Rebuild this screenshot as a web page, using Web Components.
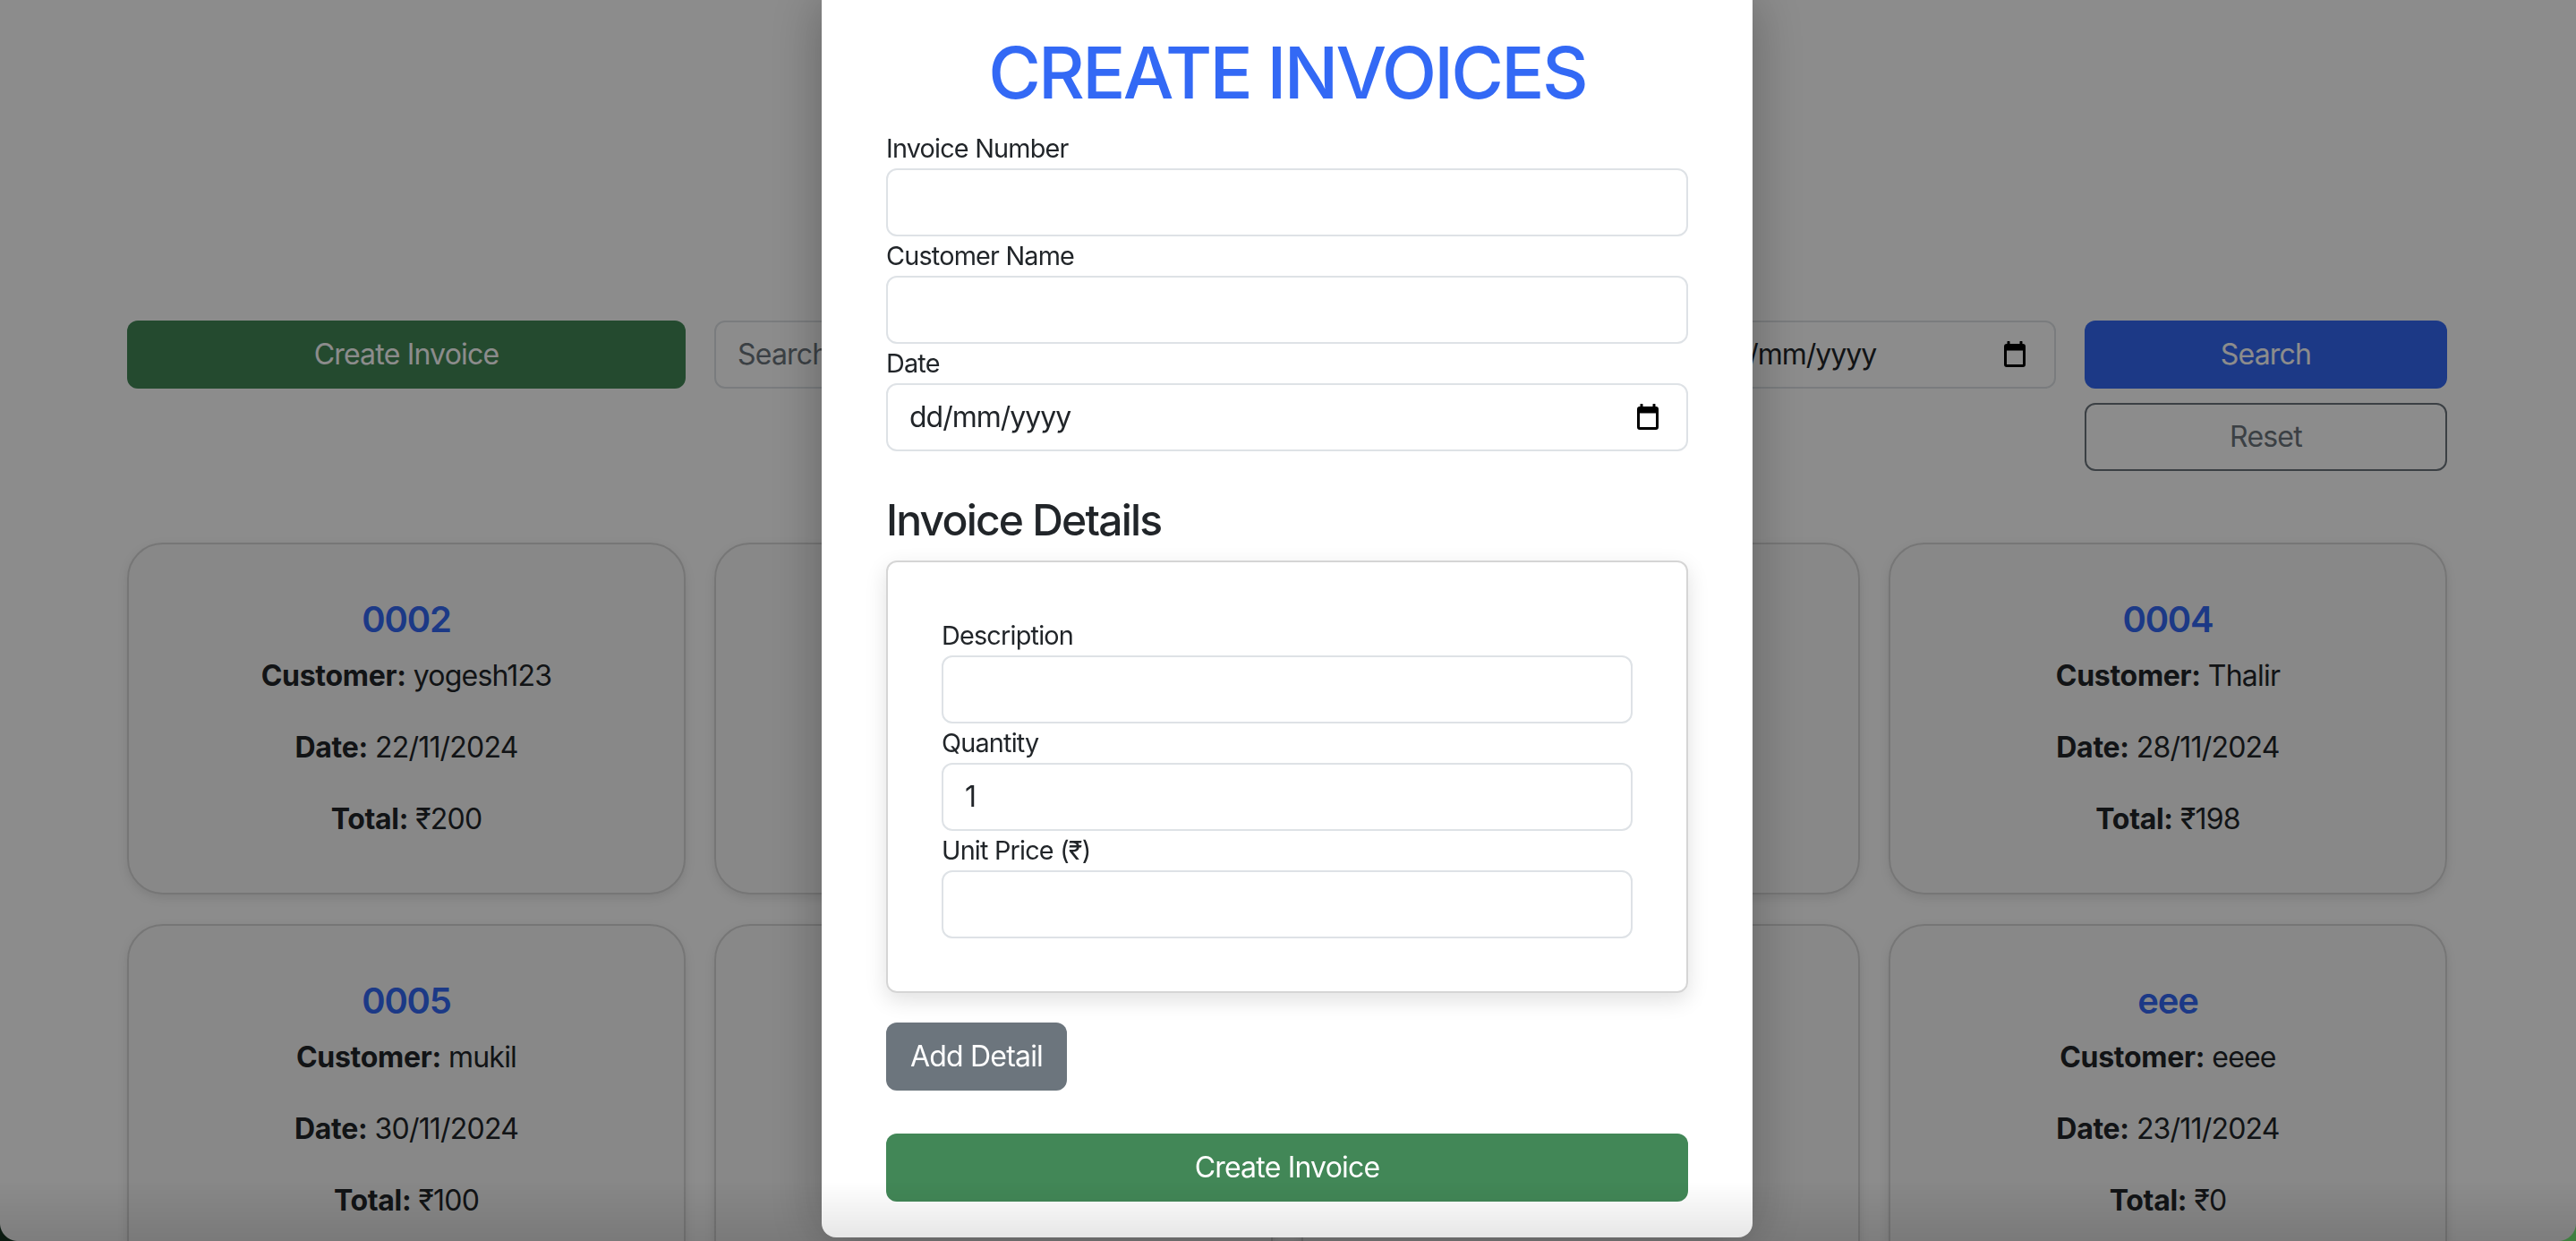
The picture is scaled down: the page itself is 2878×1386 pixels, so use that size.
<!DOCTYPE html>
<html>
<head>
<meta charset="utf-8">
<title>Invoices</title>
<style>
  html, body { margin: 0; height: 100%; overflow: hidden; background: #fff; }
  body { font: 32px/48px Inter, "Noto Sans", sans-serif; color: #212529; letter-spacing: -0.8px; }
</style>
</head>
<body>
<invoice-page>
  <invoice-toolbar slot="toolbar"></invoice-toolbar>
  <invoice-card slot="cards" number="0002" customer="yogesh123" date="22/11/2024" total="₹200"></invoice-card>
  <invoice-card slot="cards"></invoice-card>
  <invoice-card slot="cards"></invoice-card>
  <invoice-card slot="cards" number="0004" customer="Thalir" date="28/11/2024" total="₹198"></invoice-card>
  <invoice-card slot="cards" number="0005" customer="mukil" date="30/11/2024" total="₹100"></invoice-card>
  <invoice-card slot="cards"></invoice-card>
  <invoice-card slot="cards"></invoice-card>
  <invoice-card slot="cards" number="eee" customer="eeee" date="23/11/2024" total="₹0"></invoice-card>
</invoice-page>
<invoice-modal></invoice-modal>
<bottom-fade></bottom-fade>

<script>
const calendarIcon = `<svg width="26" height="30" viewBox="0 0 26 30" aria-hidden="true">
  <path d="M6 1v4M20 1v4" stroke="#000" stroke-width="3" stroke-linecap="round"/>
  <path fill="#000" fill-rule="evenodd" d="M4 3h18a3 3 0 0 1 3 3v20a3 3 0 0 1-3 3H4a3 3 0 0 1-3-3V6a3 3 0 0 1 3-3zm0 7.5V26h18V10.500z"/>
</svg>`;

class InvoicePage extends HTMLElement {
  connectedCallback() {
    this.attachShadow({ mode: 'open' });
    this.shadowRoot.innerHTML = `
      <style>
        :host { display: block; padding: 358px 144px 0 142px; }
        .cards {
          display: grid;
          grid-template-columns: repeat(4, 624px);
          gap: 33px 32px;
          margin-top: 80px;
        }
      </style>
      <slot name="toolbar"></slot>
      <div class="cards"><slot name="cards"></slot></div>
    `;
  }
}

class InvoiceToolbar extends HTMLElement {
  connectedCallback() {
    this.attachShadow({ mode: 'open' });
    this.shadowRoot.innerHTML = `
      <style>
        :host {
          display: grid;
          grid-template-columns: 624px 624px 405px 406px 405px;
          column-gap: 32px;
          align-items: start;
          margin-right: -4px;
        }
        .btn, .field {
          box-sizing: border-box;
          height: 76px;
          border-radius: 12px;
          display: flex;
          align-items: center;
        }
        .btn { justify-content: center; color: #fff; border: 2px solid transparent; }
        .green { background: #428757; }
        .blue { background: #3369f5; margin-bottom: 16px; }
        .outline { color: #6c757d; border-color: #6c757d; }
        .field {
          border: 2px solid #dee2e6;
          background: #fff;
          padding: 0 31px 0 24px;
          justify-content: space-between;
        }
        .placeholder { color: #6c757d; white-space: nowrap; }
        .date { letter-spacing: -1px; margin-left: -1px; }
        svg { display: block; }
      </style>
      <div class="btn green">Create Invoice</div>
      <div class="field"><span class="placeholder">Search</span></div>
      <div class="field"></div>
      <div class="field"><span class="date">dd/mm/yyyy</span>${calendarIcon}</div>
      <div>
        <div class="btn blue">Search</div>
        <div class="btn outline">Reset</div>
      </div>
    `;
  }
}

class InvoiceCard extends HTMLElement {
  connectedCallback() {
    this.attachShadow({ mode: 'open' });
    // cards under the modal have no attributes, their content can't be seen
    const number = this.getAttribute('number');
    const body = number ? `
      <h5>${number}</h5>
      <p><b>Customer:</b> ${this.getAttribute('customer')}</p>
      <p><b>Date:</b> ${this.getAttribute('date')}</p>
      <p><b>Total:</b> ${this.getAttribute('total')}</p>
    ` : '';
    this.shadowRoot.innerHTML = `
      <style>
        :host {
          display: block;
          box-sizing: border-box;
          height: 393px;
          padding: 60px 20px 0;
          background: #f8f8f8;
          border: 2px solid #d8d8d8;
          border-radius: 40px;
          box-shadow: 0 4px 12px rgba(0, 0, 0, 0.1);
          text-align: center;
        }
        h5 {
          margin: 0 0 15px;
          font-size: 40px;
          line-height: 48px;
          font-weight: 600;
          letter-spacing: -1.2px;
          color: #3369f5;
        }
        p { margin: 0 0 32px; }
        b { font-weight: 700; letter-spacing: -0.3px; }
      </style>
      ${body}
    `;
  }
}

class FormField extends HTMLElement {
  connectedCallback() {
    this.attachShadow({ mode: 'open' });
    const date = this.hasAttribute('date');
    const value = this.getAttribute('value') || (date ? 'dd/mm/yyyy' : '');
    this.shadowRoot.innerHTML = `
      <style>
        :host { display: block; }
        label { display: block; height: 44px; font-size: 28.8px; line-height: 44px; letter-spacing: -0.8px; }
        .input {
          box-sizing: border-box;
          height: 76px;
          padding: 0 30px 0 24px;
          display: flex;
          align-items: center;
          justify-content: space-between;
          background: #fff;
          border: 2px solid #dee2e6;
          border-radius: 12px;
        }
        span { letter-spacing: -1px; }
        svg { display: block; }
      </style>
      <label>${this.getAttribute('label')}</label>
      <div class="input"><span>${value}</span>${date ? calendarIcon : ''}</div>
    `;
  }
}

class InvoiceModal extends HTMLElement {
  connectedCallback() {
    this.attachShadow({ mode: 'open' });
    this.shadowRoot.innerHTML = `
      <style>
        :host {
          position: fixed;
          inset: 0;
          display: block;
          background: rgba(0, 0, 0, 0.45);
          z-index: 5;
        }
        .dialog {
          box-sizing: border-box;
          width: 1040px;
          height: 1382px;
          margin-left: 918px;
          padding: 33px 72px 0;
          background: #fff;
          border-radius: 0 0 16px 16px;
          box-shadow: 0 0 60px rgba(0, 0, 0, 0.3);
        }
        h2 {
          margin: 0 0 15px;
          font-size: 80px;
          line-height: 96px;
          font-weight: 450;
          letter-spacing: -2.7px;
          text-align: center;
          color: #3369f5;
        }
        h3 {
          margin: 48px 0 16px;
          font-size: 48px;
          line-height: 58px;
          font-weight: 500;
          letter-spacing: -1.8px;
        }
        .details {
          box-sizing: border-box;
          height: 483px;
          padding: 60px;
          border: 2px solid #d5d5d5;
          border-radius: 12px;
          box-shadow: 0 8px 24px rgba(0, 0, 0, 0.12);
        }
        .btn {
          box-sizing: border-box;
          height: 76px;
          border-radius: 12px;
          display: flex;
          align-items: center;
          justify-content: center;
          color: #fff;
        }
        .add { width: 202px; margin: 33px 0 48px; background: #6c757d; }
        .submit { background: #428757; }
      </style>
      <div class="dialog">
        <h2>CREATE INVOICES</h2>
        <form-field label="Invoice Number"></form-field>
        <form-field label="Customer Name"></form-field>
        <form-field label="Date" date></form-field>
        <h3>Invoice Details</h3>
        <div class="details">
          <form-field label="Description"></form-field>
          <form-field label="Quantity" value="1"></form-field>
          <form-field label="Unit Price (₹)"></form-field>
        </div>
        <div class="btn add">Add Detail</div>
        <div class="btn submit">Create Invoice</div>
      </div>
    `;
  }
}

// the darker strip along the bottom edge, plus the rounded window corners
class BottomFade extends HTMLElement {
  connectedCallback() {
    this.attachShadow({ mode: 'open' });
    this.shadowRoot.innerHTML = `
      <style>
        :host {
          position: fixed;
          left: 0;
          right: 0;
          bottom: 0;
          height: 66px;
          z-index: 6;
          pointer-events: none;
          background: linear-gradient(to bottom, rgba(0, 0, 0, 0), rgba(0, 0, 0, 0.1));
        }
        .corner { position: absolute; bottom: 0; width: 20px; height: 20px; }
        .left { left: 0; background: radial-gradient(circle at top right, transparent 19.5px, #0c1c12 20.5px); }
        .right { right: 0; background: radial-gradient(circle at top left, transparent 19.5px, #3f7f3f 20.5px); }
      </style>
      <div class="corner left"></div>
      <div class="corner right"></div>
    `;
  }
}

customElements.define('invoice-page', InvoicePage);
customElements.define('invoice-toolbar', InvoiceToolbar);
customElements.define('invoice-card', InvoiceCard);
customElements.define('form-field', FormField);
customElements.define('invoice-modal', InvoiceModal);
customElements.define('bottom-fade', BottomFade);
</script>
</body>
</html>
